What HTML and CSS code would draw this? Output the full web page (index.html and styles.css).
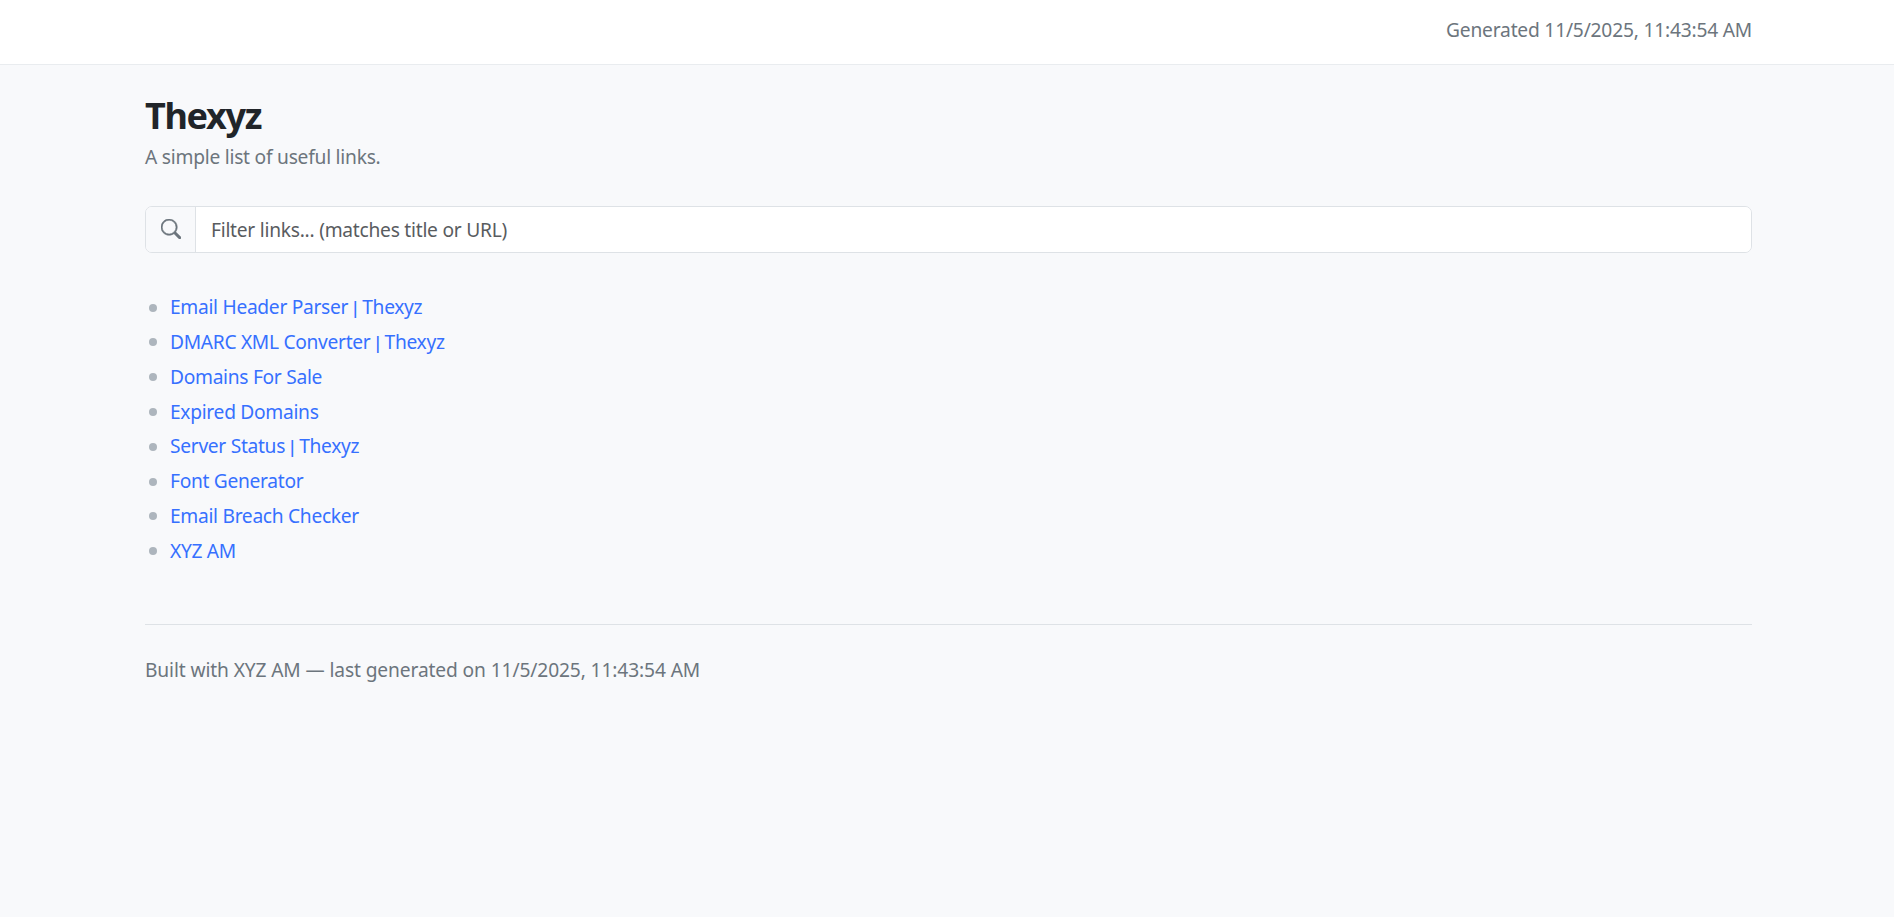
FILE: index.html
```html
<!DOCTYPE html>
<html lang="en">
<head>
    <meta charset="UTF-8">
    <meta name="viewport" content="width=device-width, initial-scale=1.0">
    <title>Thexyz</title>
    <link rel="stylesheet" href="styles.css">
</head>
<body>
    <header class="topbar">
        <div class="topbar-inner">
            <span class="generated">Generated 11/5/2025, 11:43:54 AM</span>
        </div>
    </header>

    <main class="container">
        <h1 class="title">Thexyz</h1>
        <p class="subtitle">A simple list of useful links.</p>

        <div class="search">
            <span class="search-icon">
                <svg width="20" height="20" viewBox="0 0 16 16" fill="currentColor" stroke="currentColor" stroke-width="0.45">
                    <path d="M11.742 10.344a6.5 6.5 0 1 0-1.397 1.398h-.001c.03.04.062.078.098.115l3.85 3.85a1 1 0 0 0 1.415-1.414l-3.85-3.85a1.007 1.007 0 0 0-.115-.1zM12 6.5a5.5 5.5 0 1 1-11 0 5.5 5.5 0 0 1 11 0z"/>
                </svg>
            </span>
            <input class="search-input" type="text" placeholder="Filter links... (matches title or URL)">
        </div>

        <ul class="links">
            <li><a href="#">Email Header Parser <span class="sep">|</span> Thexyz</a></li>
            <li><a href="#">DMARC XML Converter <span class="sep">|</span> Thexyz</a></li>
            <li><a href="#">Domains For Sale</a></li>
            <li><a href="#">Expired Domains</a></li>
            <li><a href="#">Server Status <span class="sep">|</span> Thexyz</a></li>
            <li><a href="#">Font Generator</a></li>
            <li><a href="#">Email Breach Checker</a></li>
            <li><a href="#">XYZ AM</a></li>
        </ul>

        <footer class="footer">Built with XYZ AM — last generated on 11/5/2025, 11:43:54 AM</footer>
    </main>
</body>
</html>
```

FILE: styles.css
```css
* {
    box-sizing: border-box;
}
html, body {
    height: 100%;
}
body {
    margin: 0;
    background-color: #f8f9fb;
    color: #212529;
    font-family: "Noto Sans", "Open Sans", sans-serif;
    font-size: 19.2px;
    line-height: 1.5;
    overflow: hidden;
}
.topbar {
    height: 65px;
    padding: 0 142px 4px 145px;
    background: #fff;
    border-bottom: 1px solid #e9ecef;
    display: flex;
    align-items: center;
    justify-content: flex-end;
}
.generated {
    color: #6c757d;
    letter-spacing: -0.2px;
}
.container {
    padding: 29px 142px 0 145px;
}
.title {
    margin: 0 0 5px;
    font-size: 36px;
    line-height: 1.22;
    font-weight: 700;
    color: #212529;
    letter-spacing: -1.3px;
}
.subtitle {
    margin: 0 0 34px;
    color: #6c757d;
    letter-spacing: -0.24px;
}
.search {
    display: flex;
    height: 47px;
    background: #fff;
    border: 1px solid #dee2e6;
    border-radius: 7px;
    overflow: hidden;
}
.search-icon {
    width: 50px;
    flex: none;
    display: flex;
    align-items: center;
    justify-content: center;
    background: #f8f9fb;
    border-right: 1px solid #dee2e6;
    color: #6c757d;
}
.search-input {
    flex: 1;
    border: 0;
    outline: 0;
    padding: 2px 15px 0;
    background: #fff;
    font: inherit;
    letter-spacing: -0.25px;
}
.search-input::placeholder {
    color: #595c5f;
    opacity: 1;
}
.links {
    list-style: none;
    margin: 37.6px 0 0;
    padding: 0 0 0 25px;
}
.links li {
    height: 34.8px;
    line-height: 34.8px;
    display: flex;
    align-items: center;
}
.links li::before {
    content: "";
    flex: none;
    width: 8px;
    height: 8px;
    margin: 0 13px 0 -21px;
    border-radius: 50%;
    background: #adb5bd;
}
.links a {
    color: #3670ff;
    text-decoration: none;
    letter-spacing: -0.3px;
}
.sep {
    font-family: "Liberation Sans", sans-serif;
}
.footer {
    margin-top: 55.6px;
    padding-top: 31px;
    border-top: 1px solid #dee2e6;
    color: #6c757d;
    letter-spacing: -0.12px;
}
```
